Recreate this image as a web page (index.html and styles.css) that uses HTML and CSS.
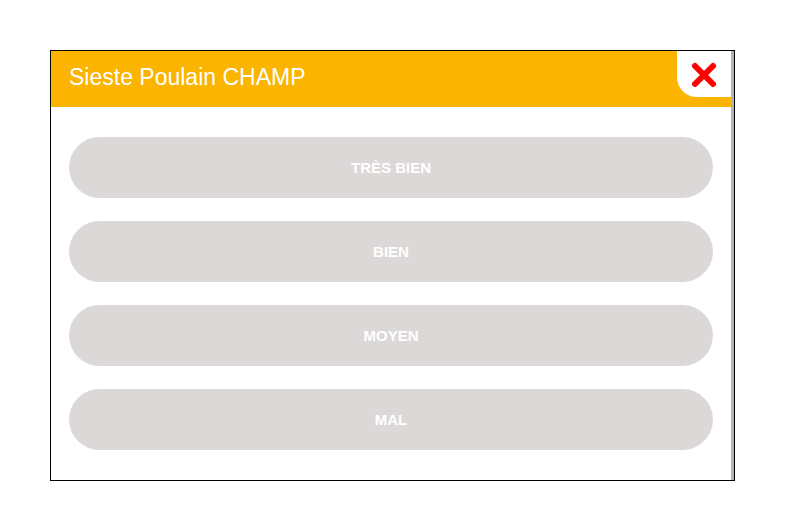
FILE: index.html
```html
<!DOCTYPE html>
<html lang="fr">
<head>
    <meta charset="UTF-8">
    <meta name="viewport" content="width=device-width, initial-scale=1.0">
    <title>Sieste Poulain CHAMP</title>
    <link rel="stylesheet" href="styles.css">
</head>
<body>
    <div class="modal-frame">
        <div class="modal">
            <div class="modal-header">
                <h1>Sieste Poulain CHAMP</h1>
                <button type="button" class="close-btn" aria-label="Fermer">
                    <svg width="26" height="26" viewBox="0 0 26 26">
                        <path d="M4 4 L22 22 M22 4 L4 22" stroke="#ff0000" stroke-width="6" stroke-linecap="round" fill="none"/>
                    </svg>
                </button>
            </div>
            <div class="modal-body">
                <button type="button" class="choice">TRÈS BIEN</button>
                <button type="button" class="choice">BIEN</button>
                <button type="button" class="choice">MOYEN</button>
                <button type="button" class="choice">MAL</button>
            </div>
        </div>
        <div class="scroll-strip"></div>
    </div>
</body>
</html>
```

FILE: styles.css
```css
body {
    margin: 0;
    background-color: #ffffff;
    font-family: "Liberation Sans", Arial, sans-serif;
}

.modal-frame {
    display: flex;
    width: 683px;
    height: 429px;
    margin: 50px 0 0 50px;
    border: 1px solid #000;
}

.modal {
    flex: 1;
    display: flex;
    flex-direction: column;
    background-color: #fff;
    border-bottom-left-radius: 3px;
}

.scroll-strip {
    width: 3px;
    background-color: #b3b3b3;
}

.modal-header {
    display: flex;
    justify-content: space-between;
    align-items: flex-start;
    height: 58px;
    background-color: #fbb400;
}

.modal-header h1 {
    margin: 0;
    padding: 13px 0 0 18px;
    color: #fff;
    font-size: 23px;
    font-weight: normal;
    line-height: 26px;
}

.close-btn {
    display: flex;
    justify-content: center;
    align-items: center;
    width: 54px;
    height: 46px;
    padding: 2px 0 0 0;
    border: none;
    border-bottom-left-radius: 20px;
    background-color: #fff;
    cursor: pointer;
}

.modal-body {
    display: flex;
    flex-direction: column;
    gap: 23px;
    padding: 30px 18px;
}

.choice {
    height: 61px;
    border: none;
    border-radius: 31px;
    background-color: #dcd8d8;
    color: #fff;
    font-family: "Liberation Sans", Arial, sans-serif;
    font-size: 15px;
    font-weight: bold;
    cursor: pointer;
}
```
